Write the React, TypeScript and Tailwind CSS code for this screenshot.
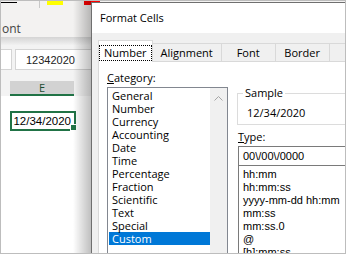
const categories = [
  'General',
  'Number',
  'Currency',
  'Accounting',
  'Date',
  'Time',
  'Percentage',
  'Fraction',
  'Scientific',
  'Text',
  'Special',
  'Custom',
]

const types = ['hh:mm', 'hh:mm:ss', 'yyyy-mm-dd hh:mm', 'mm:ss', 'mm:ss.0', '@', '[h]:mm:ss']

const tabs = [
  { label: 'Alignment', cls: 'w-[69px]' },
  { label: 'Font', cls: 'w-[54px]' },
  { label: 'Border', cls: 'w-[54px]' },
]

function FormatCellsDialog() {
  return (
    <div className="absolute left-[90px] top-[1px] w-[270px] h-[270px] flex flex-col border-l border-t border-[#6f6f6f] bg-[#f0f0f0] font-['Open_Sans',sans-serif] text-[11px] text-black">
      <div className="h-[30px] bg-white pl-[8px] pt-[7px] leading-[15px]">Format Cells</div>

      <div className="flex-1 flex flex-col pl-[6px] pt-[7px]">
        {/* tab strip */}
        <div className="flex items-end h-[22px] shrink-0">
          <div className="w-[61px] h-[22px] bg-white border-l border-t border-r border-[#d9d9d9] flex justify-center pt-[4px]">
            <span className="h-[16px] px-[4px] border border-dotted border-black leading-[14px]">Number</span>
          </div>
          {tabs.map(t => (
            <div
              key={t.label}
              className={`${t.cls} h-[19px] shrink-0 border-t border-r border-b border-[#d9d9d9] flex justify-center pt-[2px] leading-[14px]`}>
              {t.label}
            </div>
          ))}
          {/* next tab, its label lies past the edge */}
          <div className="w-[60px] h-[19px] shrink-0 border-t border-r border-b border-[#d9d9d9]" />
        </div>

        {/* tab page */}
        <div className="flex-1 flex bg-white border-l border-[#d9d9d9]">
          <div className="pl-[8px] pt-[9px] flex flex-col">
            <div className="leading-[13px]">
              <span className="underline">C</span>ategory:
            </div>
            <div className="mt-[3px] w-[121px] flex-1 flex border border-[#828790]">
              <div className="w-[102px] pl-px pt-px">
                {categories.map(c => (
                  <div
                    key={c}
                    className={
                      c === 'Custom'
                        ? 'h-[13px] leading-[13px] pl-[3px] bg-[#0078d7] text-white'
                        : 'h-[13px] leading-[13px] pl-[3px]'
                    }>
                    {c}
                  </div>
                ))}
              </div>
              <div className="w-[17px] bg-[#f0f0f0] flex justify-center pt-[8px]">
                <svg width="9" height="5" viewBox="0 0 9 5">
                  <polyline points="0.5,4.5 4.5,0.5 8.5,4.5" fill="none" stroke="#a6a6a6" strokeWidth="1" />
                </svg>
              </div>
            </div>
          </div>

          <div className="ml-[9px] flex-1 flex flex-col">
            <fieldset className="mt-[24px] border border-[#dcdcdc] pb-[5px]">
              <legend className="ml-[5px] px-[2px] leading-[14px]">Sample</legend>
              <div className="pt-[6px] pl-[9px] leading-[13px]">12/34/2020</div>
            </fieldset>

            <div className="mt-[5px] ml-px leading-[13px]">
              <span className="underline">T</span>ype:
            </div>
            <div className="mt-[3px] ml-px h-[20px] border border-[#7a7a7a] pl-[4px] leading-[18px] font-['Liberation_Sans',Arial,sans-serif]">
              {'00\\/00\\/0000'}
            </div>
            <div className="-mt-px ml-px flex-1 border border-[#7a7a7a] pt-[2px] pl-[4px] font-['Liberation_Sans',Arial,sans-serif]">
              {types.map(t => (
                <div key={t} className="h-[13px] leading-[13px] whitespace-nowrap">{t}</div>
              ))}
            </div>
          </div>
        </div>
      </div>
    </div>
  )
}

export default function App() {
  return (
    <div className="relative w-[346px] h-[254px] overflow-hidden border border-[#bdbdbd] bg-white">
      {/* ribbon edge */}
      <div className="h-[36px] bg-[#f3f2f1] flex flex-col">
        <div className="flex h-[4px] items-start shrink-0">
          <div className="w-[16px] h-px mt-px bg-black" />
          <div className="ml-[22px] w-px h-[7px] bg-[#c8c8c8]" />
          <div className="ml-[7px] w-[16px] h-[4px] bg-[#ffff00]" />
          <div className="ml-[21px] w-[16px] h-[4px] bg-[#ff0000]" />
        </div>
        <div className="pl-px pt-[16px] text-[12px] leading-[16px] text-[#444] font-['Open_Sans',sans-serif]">ont</div>
      </div>
      <div className="h-[8px] bg-gradient-to-b from-[#d4d4d4] to-[#f1f1f1]" />

      {/* formula bar */}
      <div className="h-[36px] bg-[#f3f3f3] pt-[4px] flex items-start font-['Liberation_Sans',Arial,sans-serif] text-[11px] text-[#222]">
        <div className="w-[11px] h-[21px] bg-white border-y border-r border-[#d4d4d4]" />
        <div className="ml-[3px] w-[90px] h-[21px] bg-white border border-[#d4d4d4] pl-[10px] pt-[3px] leading-[15px]">
          12342020
        </div>
      </div>

      {/* column header */}
      <div className="h-[15px] bg-[#f3f3f3] flex pl-[9px]">
        <div className="w-[64px] h-[15px] bg-[#d2d2d2] border-b-2 border-[#217346] text-center text-[11px] leading-[13px] text-[#1d4d32] font-['Open_Sans',sans-serif]">
          E
        </div>
      </div>

      {/* cells */}
      <div className="pt-[15px] pl-[9px]">
        <div className="relative w-[66px] h-[20px] border-2 border-[#217346] text-right pr-[3px] text-[11.5px] leading-[16px] text-black font-['Liberation_Sans',Arial,sans-serif]">
          12/34/2020
          <div className="absolute -right-[3px] -bottom-[2px] w-[7px] h-[7px] border border-white bg-[#217346]" />
        </div>
      </div>

      {/* dialog drop shadow */}
      <div className="absolute left-[72px] top-0 bottom-0 w-[18px] bg-gradient-to-r from-transparent to-black/25" />

      <FormatCellsDialog />
    </div>
  )
}
